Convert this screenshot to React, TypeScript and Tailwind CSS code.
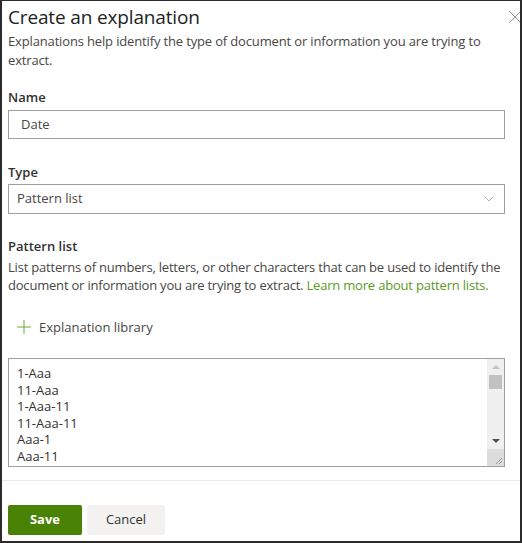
import { Plus, X, ChevronDown } from 'lucide-react'

const patterns = ['1-Aaa', '11-Aaa', '1-Aaa-11', '11-Aaa-11', 'Aaa-1', 'Aaa-11']

// Fake textarea scrollbar (arrows, thumb, resize grip)
function ScrollColumn() {
  return (
    <div className="flex w-[17px] flex-col bg-[#f0f0f0]">
      <div className="flex h-[16px] items-center justify-center">
        <div className="h-0 w-0 border-x-[4px] border-b-[4px] border-x-transparent border-b-[#c2c2c2]" />
      </div>
      <div className="mx-[2px] h-[14px] bg-[#c1c1c1]" />
      <div className="flex-1" />
      <div className="flex h-[16px] items-center justify-center">
        <div className="h-0 w-0 border-x-[4px] border-t-[4px] border-x-transparent border-t-[#505050]" />
      </div>
      <div className="relative h-[17px] bg-[#dcdcdc]">
        <svg className="absolute right-[1px] bottom-[1px]" width="10" height="10" viewBox="0 0 10 10">
          <path d="M9 3 L3 9 M9 6 L6 9" stroke="#9a9a9a" strokeWidth="1" />
        </svg>
      </div>
    </div>
  )
}

export default function App() {
  return (
    <div
      className="flex h-[543px] w-[522px] flex-col overflow-hidden border-t border-r-[2px] border-b-[2px] border-l-[2px] border-[#2b2b2b] bg-white text-[#323130]"
      style={{ fontFamily: '"Open Sans", "Noto Sans", sans-serif' }}
    >
      <div className="flex items-start justify-between pl-[6px] pt-[1px]">
        <h1 className="text-[19px] leading-[30px] tracking-[-0.15px] text-[#201f1e]">Create an explanation</h1>
        <X className="mt-[4px] mr-[-6px] h-[22px] w-[22px] text-[#8a8886]" strokeWidth={1} />
      </div>
      <p className="pl-[6px] pr-[10px] text-[13px] leading-[19px] tracking-[-0.15px] text-[#484644]">
        Explanations help identify the type of document or information you are trying to extract.
      </p>

      <div className="mt-[17px] px-[6px]">
        <label className="block text-[13px] leading-[20px] font-semibold">Name</label>
        <div className="mt-[3px] flex h-[29px] w-[497px] items-center border border-[#a19f9d] pl-[12px] text-[13px] text-[#484644]">
          Date
        </div>

        <label className="mt-[23px] block text-[13px] leading-[20px] font-semibold">Type</label>
        <div className="mt-[2px] flex h-[30px] w-[497px] items-center justify-between border border-[#a19f9d] pr-[7px] pl-[8px] text-[13px] text-[#484644]">
          <span>Pattern list</span>
          <ChevronDown className="h-[16px] w-[16px] text-[#8a8886]" strokeWidth={1} />
        </div>

        <label className="mt-[22px] block text-[13px] leading-[20px] font-semibold">Pattern list</label>
        <p className="mt-[2px] text-[13px] leading-[18px] tracking-[-0.2px] text-[#484644]">
          List patterns of numbers, letters, or other characters that can be used to identify the document or
          information you are trying to extract. <span className="text-[#5c9a1f]">Learn more about pattern lists.</span>
        </p>

        <div className="mt-[22px] flex items-center gap-[4px] pl-[5px] text-[13px] leading-[20px] text-[#484644]">
          <Plus className="h-[22px] w-[22px] text-[#6fa83a]" strokeWidth={1.1} />
          <span>Explanation library</span>
        </div>

        <div className="mt-[20px] flex h-[109px] w-[497px] border border-[#a19f9d]">
          <div className="flex-1 overflow-hidden pt-[6px] pl-[8px] text-[13px] leading-[16.5px] text-[#323130]">
            {patterns.map((p) => (
              <div key={p}>{p}</div>
            ))}
          </div>
          <ScrollColumn />
        </div>
      </div>

      <div className="mt-[13px] border-t border-[#edebe9]" />

      <div className="mt-[24px] flex gap-[5px] px-[6px]">
        <button className="h-[30px] w-[74px] rounded-[2px] bg-[#498205] text-[13px] font-bold text-white">
          Save
        </button>
        <button className="h-[30px] w-[78px] rounded-[2px] bg-[#f3f2f1] text-[13px] text-[#323130]">
          Cancel
        </button>
      </div>
    </div>
  )
}
